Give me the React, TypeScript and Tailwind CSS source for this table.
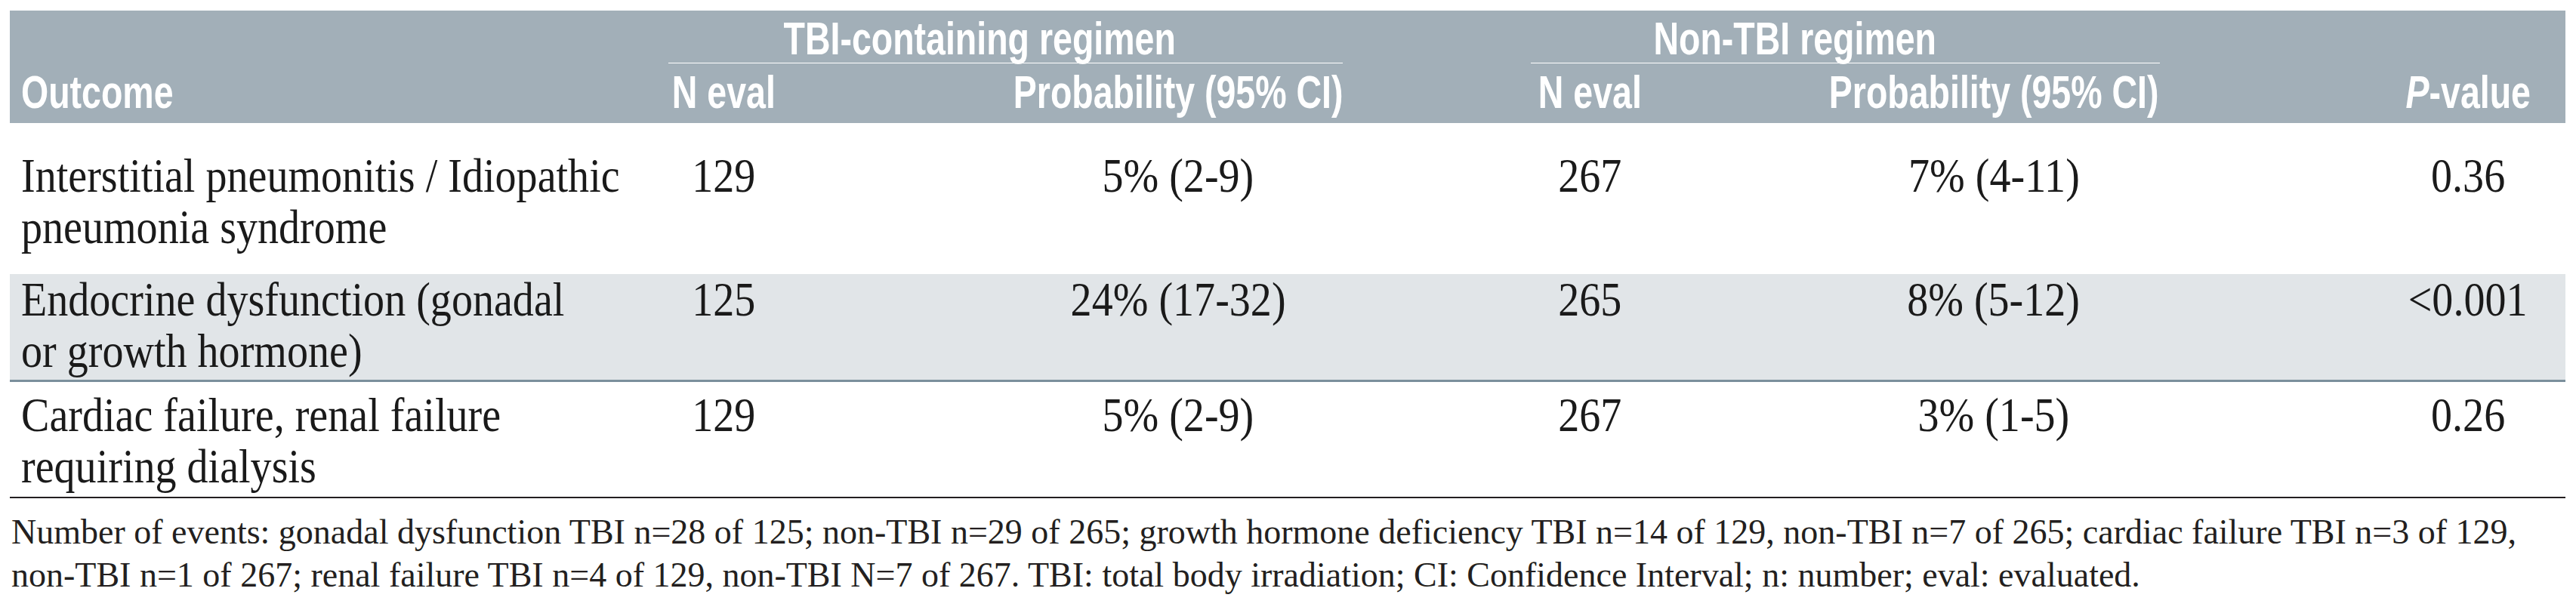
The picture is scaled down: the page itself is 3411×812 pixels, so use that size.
const COLS =
  "grid grid-cols-[872px_146px_311px_436px_249px_156px_237px_440px_294px_228px_15px]";

const SANS = "font-['Liberation_Sans','Arial',sans-serif]";
const SERIF = "font-['Liberation_Serif','Times_New_Roman',serif]";

interface Row {
  outcome: string[];
  tbiN: string;
  tbiProb: string;
  nonN: string;
  nonProb: string;
  p: string;
}

const ROWS: Row[] = [
  {
    outcome: ["Interstitial pneumonitis / Idiopathic", "pneumonia syndrome"],
    tbiN: "129",
    tbiProb: "5% (2-9)",
    nonN: "267",
    nonProb: "7% (4-11)",
    p: "0.36",
  },
  {
    outcome: ["Endocrine dysfunction (gonadal", "or growth hormone)"],
    tbiN: "125",
    tbiProb: "24% (17-32)",
    nonN: "265",
    nonProb: "8% (5-12)",
    p: "<0.001",
  },
  {
    outcome: ["Cardiac failure, renal failure", "requiring dialysis"],
    tbiN: "129",
    tbiProb: "5% (2-9)",
    nonN: "267",
    nonProb: "3% (1-5)",
    p: "0.26",
  },
];

// per-row vertical spacing / stripe, copied from the typeset table
const ROW_STYLE = [
  "pt-[36px] pb-[28px]",
  "pb-[4px] bg-[#e1e5e8] border-b-[3px] border-[#7b8f9c]",
  "pt-[10px] pb-[6px] border-b-2 border-[#231f20]",
];

// the journal uses condensed faces; squeeze the installed ones to match
const Cond = ({ children, left }: { children: React.ReactNode; left?: boolean }) => (
  <span className={`inline-block whitespace-nowrap ${left ? "origin-left" : "origin-center"} scale-x-[0.75]`}>
    {children}
  </span>
);

const Num = ({ children }: { children: React.ReactNode }) => (
  <div className="flex justify-center whitespace-nowrap">
    <span className="inline-block origin-center scale-x-[0.89]">{children}</span>
  </div>
);

function BodyRow({ row, style }: { row: Row; style: string }) {
  return (
    <div className={`${COLS} ${style} text-[63px] leading-[68px] text-[#1a1a1a]`}>
      <div className="pl-[15px]">
        <div className="origin-left scale-x-[0.89] whitespace-nowrap">
          {row.outcome.map((l, i) => (
            <div key={i}>{l}</div>
          ))}
        </div>
      </div>
      <Num>{row.tbiN}</Num>
      <div />
      <Num>{row.tbiProb}</Num>
      <div />
      <Num>{row.nonN}</Num>
      <div />
      <Num>{row.nonProb}</Num>
      <div />
      <Num>{row.p}</Num>
      <div />
    </div>
  );
}

export default function App() {
  return (
    <div className="min-h-[812px] w-[3411px] bg-white pt-[14px] pl-[13px]">
      <div className={`w-[3384px] ${SERIF}`}>
        {/* header */}
        <div className={`bg-[#a2afb8] pt-[8px] pb-[13px] text-white font-bold ${SANS} text-[62px] leading-[57px]`}>
          <div className={COLS}>
            <div className="col-start-2 col-end-5 flex justify-center border-b border-white pb-[4px] pr-[69px]">
              <Cond>TBI-containing regimen</Cond>
            </div>
            <div className="col-start-6 col-end-9 flex justify-center border-b border-white pb-[4px] pr-[133px]">
              <Cond>Non-TBI regimen</Cond>
            </div>
          </div>
          <div className={`${COLS} mt-[9px]`}>
            <div className="pl-[15px]">
              <Cond left>Outcome</Cond>
            </div>
            <div className="flex justify-center">
              <Cond>N eval</Cond>
            </div>
            <div />
            <div className="flex justify-center">
              <Cond>Probability (95% CI)</Cond>
            </div>
            <div />
            <div className="flex justify-center">
              <Cond>N eval</Cond>
            </div>
            <div />
            <div className="flex justify-center">
              <Cond>Probability (95% CI)</Cond>
            </div>
            <div />
            <div className="flex justify-center">
              <Cond>
                <span className="italic">P</span>-value
              </Cond>
            </div>
            <div />
          </div>
        </div>

        {ROWS.map((r, i) => (
          <BodyRow key={i} row={r} style={ROW_STYLE[i]} />
        ))}

        <p className="mt-[16px] pl-[2px] text-[46px] leading-[57px] text-[#231f20]">
          Number of events: gonadal dysfunction TBI n=28 of 125; non-TBI n=29 of 265; growth hormone
          deficiency TBI n=14 of 129, non-TBI n=7 of 265; cardiac failure TBI n=3 of 129, non-TBI n=1 of
          267; renal failure TBI n=4 of 129, non-TBI N=7 of 267. TBI: total body irradiation; CI:
          Confidence Interval; n: number; eval: evaluated.
        </p>
      </div>
    </div>
  );
}
